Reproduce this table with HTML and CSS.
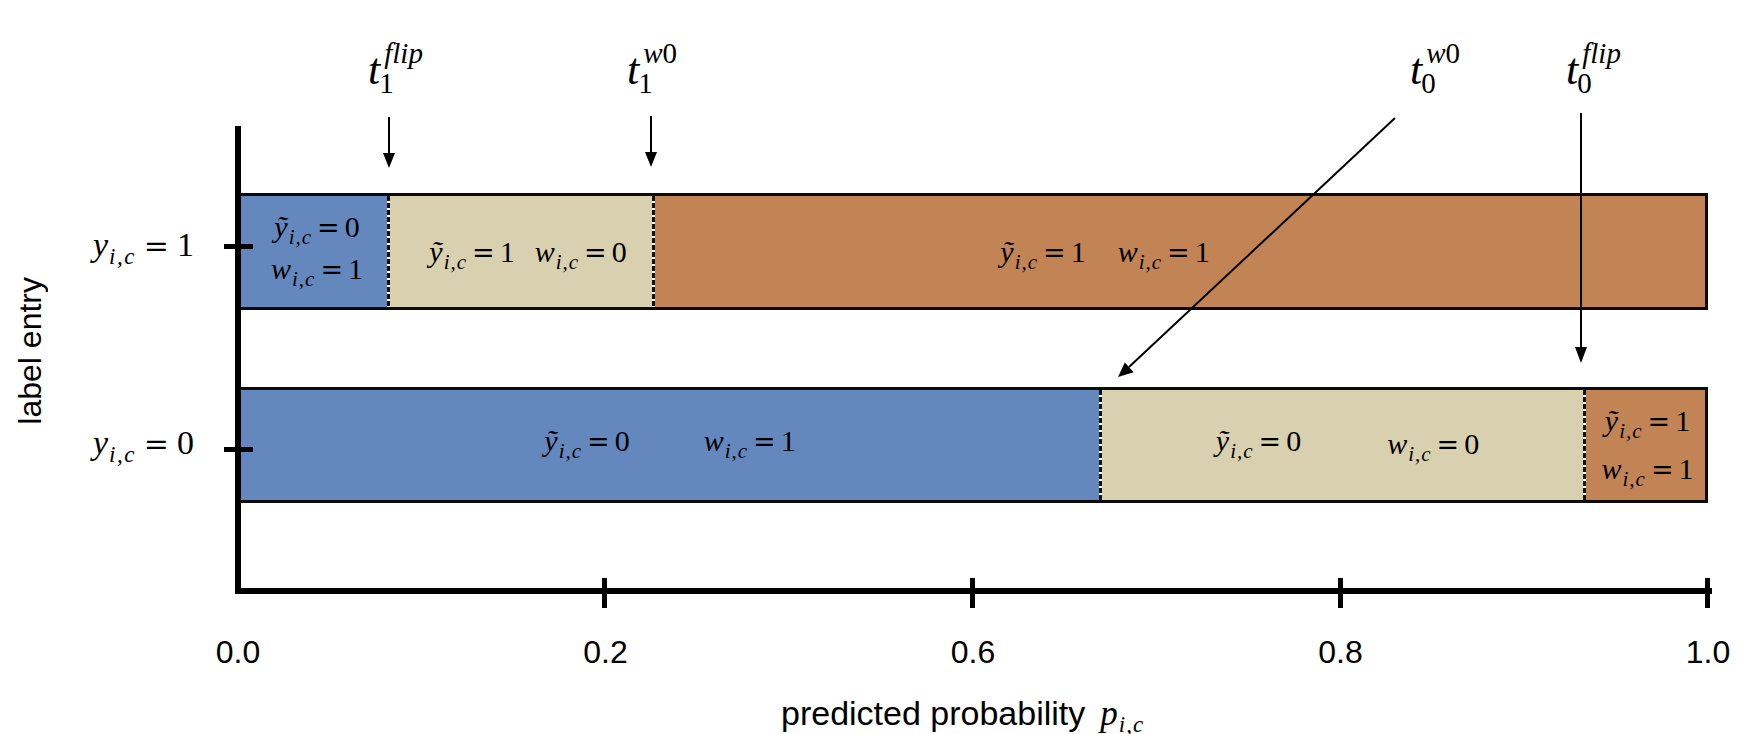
FILE: index.html
```html
<!DOCTYPE html>
<html lang="en">
<head>
<meta charset="utf-8">
<title>Label correction thresholds</title>
<link rel="stylesheet" href="styles.css">
</head>
<body>
<div class="figure">
  <div class="ytitle">label entry</div>

  <div class="ylab ylab1"><span class="m ml"><i>y</i><sub>i,c</sub><span class="eq">=</span>1</span></div>
  <div class="ylab ylab0"><span class="m ml"><i>y</i><sub>i,c</sub><span class="eq">=</span>0</span></div>

  <div class="plot">
    <div class="bar bar-top">
      <div class="seg blue w-tb">
        <div class="stack stack-tb">
          <span class="m"><i>ỹ</i><sub>i,c</sub><span class="eq">=</span>0</span>
          <span class="m"><i>w</i><sub>i,c</sub><span class="eq">=</span>1</span>
        </div>
      </div>
      <div class="sep"></div>
      <div class="seg beige w-tbe gap-tbe">
        <span class="m"><i>ỹ</i><sub>i,c</sub><span class="eq">=</span>1</span>
        <span class="m"><i>w</i><sub>i,c</sub><span class="eq">=</span>0</span>
      </div>
      <div class="sep"></div>
      <div class="seg orange grow pad-to gap-to">
        <span class="m"><i>ỹ</i><sub>i,c</sub><span class="eq">=</span>1</span>
        <span class="m"><i>w</i><sub>i,c</sub><span class="eq">=</span>1</span>
      </div>
    </div>

    <div class="bar bar-bottom">
      <div class="seg blue w-bb gap-bb lift">
        <span class="m"><i>ỹ</i><sub>i,c</sub><span class="eq">=</span>0</span>
        <span class="m"><i>w</i><sub>i,c</sub><span class="eq">=</span>1</span>
      </div>
      <div class="sep"></div>
      <div class="seg beige w-bbe gap-bbe lift">
        <span class="m"><i>ỹ</i><sub>i,c</sub><span class="eq">=</span>0</span>
        <span class="m mlow"><i>w</i><sub>i,c</sub><span class="eq">=</span>0</span>
      </div>
      <div class="sep"></div>
      <div class="seg orange grow">
        <div class="stack stack-bo">
          <span class="m"><i>ỹ</i><sub>i,c</sub><span class="eq">=</span>1</span>
          <span class="m"><i>w</i><sub>i,c</sub><span class="eq">=</span>1</span>
        </div>
      </div>
    </div>

    <span class="ytick ytick1"></span>
    <span class="ytick ytick0"></span>
    <span class="xtick xt2"></span>
    <span class="xtick xt6"></span>
    <span class="xtick xt8"></span>
    <span class="xtick xt10"></span>
  </div>

  <div class="xticks">
    <span>0.0</span><span>0.2</span><span>0.6</span><span>0.8</span><span>1.0</span>
  </div>

  <div class="xtitle"><span>predicted probability</span><span class="m mp"><i>p</i><sub>i,c</sub></span></div>

  <div class="tl t1f"><i class="t">t</i><span class="ss"><span class="sup"><i>flip</i></span><span class="sub">1</span></span></div>
  <div class="tl t1w"><i class="t">t</i><span class="ss"><span class="sup"><i>w</i>0</span><span class="sub">1</span></span></div>
  <div class="tl t0w"><i class="t">t</i><span class="ss"><span class="sup"><i>w</i>0</span><span class="sub">0</span></span></div>
  <div class="tl t0f"><i class="t">t</i><span class="ss"><span class="sup"><i>flip</i></span><span class="sub">0</span></span></div>

  <svg class="overlay" width="1738" height="734" viewBox="0 0 1738 734" aria-hidden="true">
    <g stroke="#000" stroke-width="2" fill="none">
      <line x1="389" y1="117" x2="389" y2="156"/>
      <line x1="651" y1="116" x2="651" y2="155"/>
      <line x1="1395" y1="118" x2="1129" y2="367"/>
      <line x1="1581" y1="113" x2="1581" y2="350"/>
    </g>
    <g fill="#000">
      <polygon points="383,153 395,153 389,168"/>
      <polygon points="645,152 657,152 651,167"/>
      <polygon points="1118,377 1133.7,372.2 1124.8,362.6"/>
      <polygon points="1575,347 1587,347 1581,363"/>
    </g>
  </svg>
</div>
</body>
</html>
```

FILE: styles.css
```css
html, body {
  margin: 0;
  padding: 0;
  background: #ffffff;
}

.figure {
  position: relative;
  width: 1738px;
  height: 734px;
  display: grid;
  grid-template-columns: 60px 175px 1477px 1fr;
  grid-template-rows: 126px 67px 117px 77px 116px 91px auto auto;
  font-family: "Liberation Sans", Arial, sans-serif;
  color: #000;
}

/* ---------- axis titles ---------- */
.ytitle {
  grid-column: 1;
  grid-row: 2 / 7;
  justify-self: center;
  align-self: start;
  margin-top: 151px;
  writing-mode: vertical-rl;
  transform: rotate(180deg);
  font-size: 32px;
  line-height: 32px;
  white-space: nowrap;
}

.xticks {
  grid-column: 3 / 5;
  grid-row: 7;
  display: flex;
  justify-content: space-between;
  margin-left: -37px;
  width: 1550px;
  margin-top: 42px;
  font-size: 32px;
  line-height: 32px;
}

.xticks span {
  width: 80px;
  text-align: center;
  white-space: nowrap;
}

.xtitle {
  grid-column: 1 / -1;
  grid-row: 8;
  display: flex;
  align-items: baseline;
  margin-left: 781px;
  margin-top: 23px;
  font-size: 34px;
  line-height: 36px;
  white-space: nowrap;
}

/* ---------- math text ---------- */
.m {
  font-family: "Liberation Serif", "Times New Roman", serif;
  font-size: 30px;
  line-height: 1;
  white-space: nowrap;
}

.m sub {
  font-size: 21px;
  font-style: italic;
  vertical-align: -7px;
  line-height: 0;
  letter-spacing: 1px;
  margin-left: 1px;
}

.m .eq {
  font-family: "DejaVu Serif", serif;
  font-size: 27px;
  margin: 0 5px;
}

.mlow {
  position: relative;
  top: 3px;
}

.ml {
  font-size: 34px;
}

.ml sub {
  font-size: 23px;
  letter-spacing: 1.5px;
  vertical-align: -8px;
}

.ml .eq {
  font-size: 30px;
  margin: 0 8px;
}

.mp {
  font-size: 35px;
  margin-left: 15px;
}

.mp sub {
  font-size: 23px;
}

/* ---------- y tick labels ---------- */
.ylab {
  grid-column: 2;
  justify-self: end;
  align-self: start;
  padding-right: 41px;
  line-height: 34px;
}

.ylab1 {
  grid-row: 3;
  margin-top: 35px;
}

.ylab0 {
  grid-row: 5;
  margin-top: 39px;
}

/* ---------- plot ---------- */
.plot {
  grid-column: 3;
  grid-row: 2 / 7;
  position: relative;
  box-sizing: border-box;
  border-left: 6px solid #000;
  border-bottom: 6px solid #000;
  display: flex;
  flex-direction: column;
  gap: 77px;
  padding-top: 67px;
}

.bar {
  display: flex;
  width: 1467px;
  box-sizing: border-box;
  border: 3px solid #0b0b0b;
  border-left: 0;
  flex: none;
}

.bar-top {
  height: 117px;
}

.bar-bottom {
  height: 116px;
}

.seg {
  box-sizing: border-box;
  display: flex;
  align-items: center;
  justify-content: center;
  flex: none;
  min-width: 0;
}

.grow {
  flex: 1;
}

.blue {
  background: #6488bd;
}

.beige {
  background: #d9d0b0;
}

.orange {
  background: #c28455;
}

.sep {
  width: 3px;
  flex: none;
  background: repeating-linear-gradient(to bottom, #111 0 5px, #fff 5px 7px);
}

.w-tb { width: 146px; }
.w-tbe { width: 262px; }
.w-bb { width: 858px; }
.w-bbe { width: 481px; }

.gap-tbe { gap: 20px; padding-left: 14px; }
.gap-to { gap: 32px; }
.pad-to { padding-right: 150px; }
.gap-bb { gap: 74px; }
.gap-bbe { gap: 86px; padding-left: 10px; }
.lift { padding-bottom: 8px; }

.stack {
  display: flex;
  flex-direction: column;
  align-items: center;
}

.stack-tb {
  line-height: 41px;
  padding-bottom: 8px;
  padding-left: 6px;
}

.stack-tb .m,
.stack-bo .m {
  line-height: inherit;
}

.stack-bo {
  line-height: 47px;
  padding-left: 4px;
}

/* ---------- ticks ---------- */
.ytick {
  position: absolute;
  left: -17px;
  width: 29px;
  height: 5px;
  background: #000;
}

.ytick1 { top: 118px; }
.ytick0 { top: 321px; }

.xtick {
  position: absolute;
  top: 452px;
  width: 5px;
  height: 30px;
  background: #000;
}

.xt2 { left: 361px; }
.xt6 { left: 729px; }
.xt8 { left: 1097px; }
.xt10 { left: 1464px; }

/* ---------- threshold annotations ---------- */
.tl {
  position: absolute;
  top: 38px;
  display: flex;
  align-items: flex-start;
  font-family: "Liberation Serif", "Times New Roman", serif;
  white-space: nowrap;
}

.tl .t {
  font-size: 44px;
  line-height: 42px;
  margin-top: 11px;
}

.tl .ss {
  display: flex;
  flex-direction: column;
  font-size: 29px;
  line-height: 30px;
  margin-left: -1px;
}

.tl .sup {
  padding-left: 5px;
}

.t1f { left: 368px; }
.t1w { left: 627px; }
.t0w { left: 1410px; }
.t0f { left: 1566px; }

.overlay {
  position: absolute;
  left: 0;
  top: 0;
  pointer-events: none;
}
```
